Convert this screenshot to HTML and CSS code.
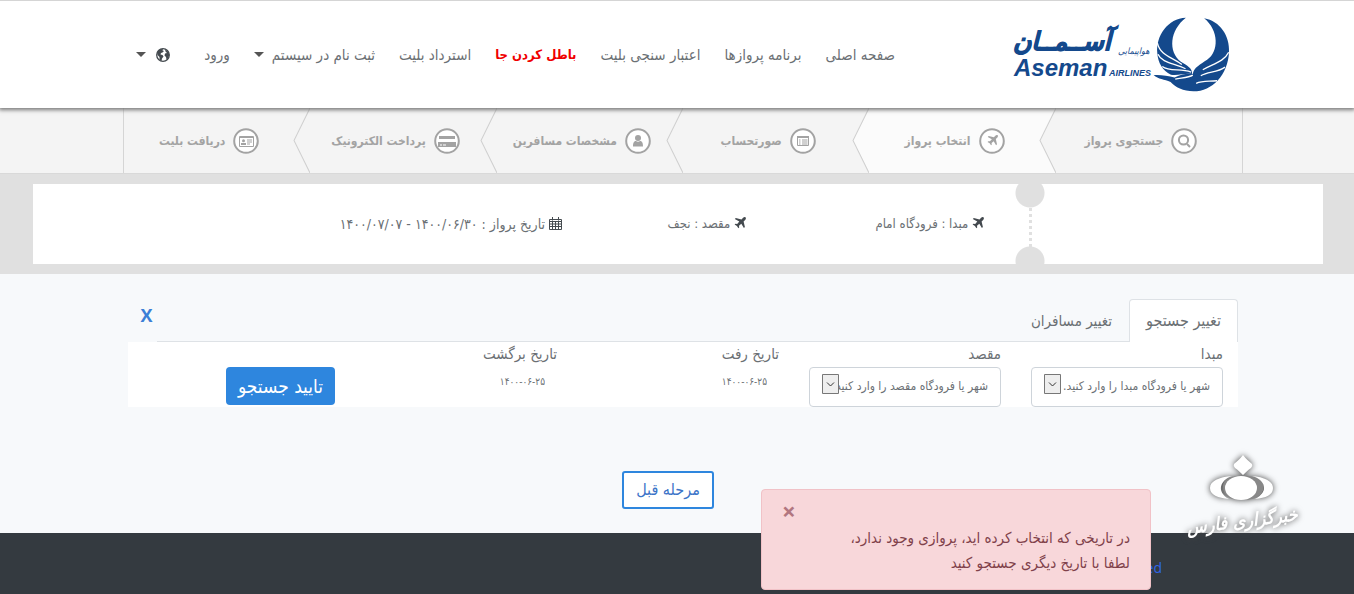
FILE: index.html
```
<!DOCTYPE html>
<html lang="fa" dir="rtl">
<head>
<meta charset="utf-8">
<meta name="viewport" content="width=device-width, initial-scale=1">
<title>انتخاب پرواز</title>
<link rel="stylesheet" href="styles.css">
</head>
<body>
<svg class="sprite" aria-hidden="true">
  <symbol id="plane" viewBox="0 0 12 12"><path d="M11.600.4c-.7-.7-1.900-.2-2.500.4L7.500 2.400 1.800 1.100.8 2.100l4.500 2.500L3.200 6.900 1.400 6.700.6 7.500l2.300 1.500 1.500 2.300.8-.8L5 8.700l2.300-2 2.600 4.400 1-1L9.600 4.400l1.500-1.500c.7-.6 1.200-1.800.5-2.500z"/></symbol>
</svg>
<header class="header">
  <div class="header-inner">
    <a class="brand" href="#" aria-label="Aseman Airlines">
      <svg class="emblem" viewBox="458 52 232 226" aria-hidden="true">
        <path d="M557 54C503 56 466 108 471 161C473 190 487 213 512 226C535 229 555 221 576 224C577 205 559 198 542 187C503 156 508 92 557 54Z"/>
        <path d="M612 56C660 64 690 110 687 158C684 225 637 276 580 276C550 276 524 263 511 248C492 240 474 240 460 227C480 225 503 230 523 234C545 224 562 222 578 224C580 205 602 194 621 181C657 157 657 92 612 56Z"/>
        <path class="feather" d="M471 130C480 168 513 172 545 195M473 164C485 191 522 191 556 208M486 201C508 218 540 206 573 218M686 158C672 187 640 193 608 211M675 203C651 220 625 216 602 229M651 244C626 247 608 243 588 252M525 239C545 235 565 235 578 227"/>
      </svg>
      <svg class="wordmark" viewBox="0 0 140 52" aria-hidden="true">
        <text class="word-fa" x="2" y="21">آســمــان</text>
        <text class="word-fa-small" x="107" y="25">هواپیمایی</text>
        <text class="word-en" x="3" y="47">Aseman</text>
        <text class="word-en-small" x="98" y="47">AIRLINES</text>
      </svg>
    </a>
    <nav class="nav">
      <a href="#">صفحه اصلی</a>
      <a href="#">برنامه پروازها</a>
      <a href="#">اعتبار سنجی بلیت</a>
      <a class="current" href="#">باطل کردن جا</a>
      <a href="#">استرداد بلیت</a>
      <a class="drop" href="#">ثبت نام در سیستم</a>
      <a href="#">ورود</a>
      <a class="drop language" href="#" aria-label="زبان"><svg width="14" height="14" viewBox="0 0 14 14" aria-hidden="true"><circle cx="7" cy="7" r="6.300" fill="#fff" stroke="#444a4f" stroke-width="1.300"/><path fill="#444a4f" d="M1 4.500 3.500 1.500 7 .8 6.500 2.500 8 3 6.500 4.500 5 5 4.500 6.500 6.500 7 7.500 8.500 6 10.500 5.500 13 3.500 11.500 3.500 9 1.500 7zM9 1 12.500 4 13.300 7 12 10.500 10.500 11.500 10 9 8.500 7.500 9 5.500 11 5 9.500 3.500z"/></svg></a>
    </nav>
  </div>
</header>

<div class="steps-bar">
  <ol class="steps">
    <li class="step"><svg class="tip" viewBox="0 0 17 64" preserveAspectRatio="none" aria-hidden="true"><path d="M17 0 1 32 17 64"/></svg>
      <svg class="icon" viewBox="0 0 26 26" aria-hidden="true"><circle class="ring" cx="13" cy="13" r="11.800"/><circle class="line" cx="12.500" cy="12" r="4.600"/><path class="line" d="m16 16 3 3"/></svg><span>جستجوی پرواز</span></li>
    <li class="step active"><svg class="tip" viewBox="0 0 17 64" preserveAspectRatio="none" aria-hidden="true"><path d="M17 0 1 32 17 64"/></svg>
      <svg class="icon" viewBox="0 0 26 26" aria-hidden="true"><circle class="ring" cx="13" cy="13" r="11.800"/><use href="#plane" x="8" y="7" width="11" height="11"/></svg><span>انتخاب پرواز</span></li>
    <li class="step"><svg class="tip" viewBox="0 0 17 64" preserveAspectRatio="none" aria-hidden="true"><path d="M17 0 1 32 17 64"/></svg>
      <svg class="icon" viewBox="0 0 26 26" aria-hidden="true"><circle class="ring" cx="13" cy="13" r="11.800"/><path d="M7 8h12v2H7z"/><path class="thin" d="M7.500 8.500h11v9h-11zM9 12h1.500M12 12h5.500M9 14h1.500M12 14h5.500M9 16h1.500M12 16h5.500"/></svg><span>صورتحساب</span></li>
    <li class="step"><svg class="tip" viewBox="0 0 17 64" preserveAspectRatio="none" aria-hidden="true"><path d="M17 0 1 32 17 64"/></svg>
      <svg class="icon" viewBox="0 0 26 26" aria-hidden="true"><circle class="ring" cx="13" cy="13" r="11.800"/><circle cx="13" cy="10" r="3"/><path d="M8 18.500c0-3 .5-5.500 3-5.500 1 1 3 1 4 0 2.500 0 3 2.500 3 5.500z"/></svg><span>مشخصات مسافرین</span></li>
    <li class="step"><svg class="tip" viewBox="0 0 17 64" preserveAspectRatio="none" aria-hidden="true"><path d="M17 0 1 32 17 64"/></svg>
      <svg class="icon" viewBox="0 0 26 26" aria-hidden="true"><circle class="ring" cx="13" cy="13" r="11.800"/><path d="M5 8h16v3H5zM4 14h18v5H4z"/><path fill="#fff" d="M6 16.500h2v1H6zM9 16.500h3v1H9z"/></svg><span>پرداخت الکترونیک</span></li>
    <li class="step"><svg class="icon" viewBox="0 0 26 26" aria-hidden="true"><circle class="ring" cx="13" cy="13" r="11.800"/><path class="thin" d="M6.500 8.500h14v10h-14zM6.500 9.500h14M14 12h5M14 14h5M14 16h3"/><circle cx="10.500" cy="12.800" r="1.500"/><path d="M8 17v-2h5v2z"/></svg><span>دریافت بلیت</span></li>
  </ol>
</div>

<section class="summary">
  <div class="ticket">
    <div class="stub"></div>
    <p><svg width="12" height="12" aria-hidden="true"><use href="#plane"/></svg> مبدا : فرودگاه امام</p>
    <p><svg width="12" height="12" aria-hidden="true"><use href="#plane"/></svg> مقصد : نجف</p>
    <p class="dates"><svg width="13" height="13" viewBox="0 0 13 13" aria-hidden="true"><path fill="none" stroke="#444a4f" d="M.5 2.500h12v10H.5zM.5 4.500h12M.5 7h12M.5 9.500h12M3.500 5v7M6.500 5v7M9.500 5v7M3.500 0v3.500M9.500 0v3.500"/></svg> تاریخ پرواز : ۱۴۰۰/۰۶/۳۰ - ۱۴۰۰/۰۷/۰۷</p>
  </div>
</section>

<main class="main">
  <div class="content">
    <div class="tabs">
      <div class="tab-list">
        <button class="tab selected" type="button">تغییر جستجو</button>
        <button class="tab" type="button">تغییر مسافران</button>
      </div>
      <button class="dismiss" type="button">X</button>
    </div>
    <form class="search">
      <div class="field">
        <label for="origin">مبدا</label>
        <div class="select-box">
          <select id="origin"><option>شهر یا فرودگاه مبدا را وارد کنید.</option></select>
          <svg class="arrow" viewBox="0 0 17 20" aria-hidden="true"><path d="M.5.5h16v19H.5z"/><path class="chevron" d="m5 8.500 3.500 3.500L12 8.500"/></svg>
        </div>
      </div>
      <div class="field">
        <label for="destination">مقصد</label>
        <div class="select-box">
          <select id="destination"><option>شهر یا فرودگاه مقصد را وارد کنید</option></select>
          <svg class="arrow" viewBox="0 0 17 20" aria-hidden="true"><path d="M.5.5h16v19H.5z"/><path class="chevron" d="m5 8.500 3.500 3.500L12 8.500"/></svg>
        </div>
      </div>
      <div class="field">
        <label for="depart">تاریخ رفت</label>
        <input id="depart" type="text" value="۱۴۰۰-۰۶-۲۵">
      </div>
      <div class="field">
        <label for="return">تاریخ برگشت</label>
        <input id="return" type="text" value="۱۴۰۰-۰۶-۲۵">
      </div>
      <div class="field submit"><button class="confirm" type="button">تایید جستجو</button></div>
    </form>
    <div class="back-row"><button class="back" type="button">مرحله قبل</button></div>
  </div>
</main>

<footer class="footer"><a href="#">ed</a></footer>

<div class="alert" role="alert">
  <button class="close" type="button" aria-label="بستن">×</button>
  <p>در تاریخی که انتخاب کرده اید، پروازی وجود ندارد،<br>لطفا با تاریخ دیگری جستجو کنید</p>
</div>

<svg class="agency" viewBox="0 0 130 100" role="img" aria-label="خبرگزاری فارس">
  <path d="M65 7C68 11 71 13 74 16Q75 18 73 20C70 22 68 24 65 27C62 24 60 22 57 20Q55 18 56 16C59 13 62 11 65 7Z"/>
  <path class="shade" d="M45 38C45 30 54 28 65 28S86 30 86 38 79 52 65 52 45 48 45 38Z"/>
  <path fill-rule="evenodd" d="M32 40C32 33 41 29 54 28C42 32 38 44 51 51C40 50 32 47 32 40ZM95 40C95 33 86 29 74 28C88 32 91 44 77 51C88 50 95 47 95 40Z"/>
  <ellipse cx="63" cy="40" rx="16" ry="12"/>
  <g transform="rotate(-7 65 80)"><text x="65" y="79">خبرگزاری فارس</text></g>
</svg>
</body>
</html>
```
FILE: styles.css
```
* { box-sizing: border-box; }
body {
  margin: 0;
  min-height: 100vh;
  display: flex;
  flex-direction: column;
  position: relative;
  background: #f7f9fb;
  color: #6b7074;
  font: 15px/24px "DejaVu Sans Condensed", "DejaVu Sans", sans-serif;
}
button, input, select { font: inherit; color: inherit; }
button { cursor: pointer; }
a { text-decoration: none; color: inherit; }
p { margin: 0; }
.sprite { position: absolute; width: 0; height: 0; }

.header {
  position: relative;
  z-index: 10;
  padding-left: 12px;
  background: #fff;
  border-top: 1px solid #d5d5d5;
  box-shadow: 0 1px 4px 1px #777;
}
.header-inner {
  max-width: 1110px;
  margin: 0 auto;
  padding: 16px 8px;
  display: flex;
  align-items: center;
}
.brand { display: flex; align-items: center; gap: 2px; }
.emblem { width: 77px; height: 75px; fill: #14498c; }
.feather { fill: none; stroke: #fff; stroke-width: 4; }
.wordmark { width: 140px; height: 52px; direction: ltr; fill: #14498c; overflow: visible; }
.word-fa { font: italic bold 25px "DejaVu Sans", sans-serif; stroke: #14498c; stroke-width: 1; }
.word-fa-small { font: italic 9px "DejaVu Sans Condensed", sans-serif; }
.word-en { font: italic bold 24px "Liberation Sans", sans-serif; }
.word-en-small { font: italic bold 9px "Liberation Sans", sans-serif; }
.nav {
  flex: 1;
  display: flex;
  align-items: center;
  gap: 24px;
  margin-inline-start: 116px;
  white-space: nowrap;
}
.nav .current { color: #f00000; font-size: 13px; font-weight: bold; }
.drop { display: flex; align-items: center; gap: 8px; }
.language { margin-inline-start: auto; gap: 10px; }
.drop::after {
  content: "";
  border: 5px solid transparent;
  border-top-color: #555;
  border-bottom: 0;
}

.steps-bar { padding-left: 12px; background: #f4f4f4; border-bottom: 1px solid #d9d9d9; }
.steps {
  max-width: 1120px;
  margin: 0 auto;
  padding: 0;
  list-style: none;
  display: flex;
  border: solid #d5d5d5;
  border-width: 0 1px;
  color: #a3a3a3;
  font-size: 12px;
  font-weight: bold;
}
.step {
  flex: 1;
  position: relative;
  height: 65px;
  padding-inline: 18px 2px;
  display: flex;
  align-items: center;
  justify-content: center;
  gap: 8px;
  background: #f4f4f4;
  white-space: nowrap;
}
.step.active { background: #fbfbfb; }
.tip {
  position: absolute;
  z-index: 1;
  right: 100%;
  top: 0;
  width: 17px;
  height: 100%;
  fill: #f4f4f4;
  stroke: #cfcfcf;
}
.active .tip { fill: #fbfbfb; }
.icon { width: 26px; height: 26px; fill: #a3a3a3; }
.ring { fill: #fff; stroke: #a3a3a3; stroke-width: 2; }
.line { fill: none; stroke: #a3a3a3; stroke-width: 2; }
.thin { fill: none; stroke: #a3a3a3; }

.summary { background: #e0e0e0; padding: 10px 31px 10px 33px; }
.ticket {
  display: grid;
  grid-template-columns: 278fr 30px 31fr 238fr 184fr 529fr;
  align-items: center;
  height: 80px;
  background: #fff;
  font-size: 13px;
  white-space: nowrap;
}
.ticket p:nth-of-type(1) { grid-column: 4; }
.ticket .dates { font-size: 14px; }
.ticket svg { vertical-align: -1px; fill: #444a4f; }
.stub {
  grid-column: 2;
  height: 80px;
  background:
    radial-gradient(circle at 15px 9px, #e0e0e0 14px, transparent 15px),
    radial-gradient(circle at 15px 77px, #e0e0e0 14px, transparent 15px),
    repeating-linear-gradient(#e0e0e0 0 3px, transparent 3px 6px) center / 3px 100% no-repeat;
}

.main { padding: 25px 0 24px 12px; }
.content { max-width: 1110px; margin: 0 auto; }
.tabs { display: flex; align-items: center; }
.tab-list { flex: 1; display: flex; border-bottom: 1px solid #dee2e6; }
.tab {
  height: 42px;
  padding: 0 16px;
  border: 1px solid transparent;
  border-bottom: 0;
  background: none;
  border-radius: 4px 4px 0 0;
}
.tab.selected {
  height: 43px;
  margin-bottom: -1px;
  border-color: #dee2e6;
  background: #fff;
  font-size: 16px;
}
.dismiss {
  width: 29px;
  padding: 0 0 12px;
  padding-inline-end: 8px;
  border: 0;
  background: none;
  color: #3c7fd6;
  font: bold 18px/24px "Open Sans", sans-serif;
}
.search { display: grid; grid-template-columns: repeat(5, 1fr); background: #fff; }
.field { padding: 0 15px; min-width: 0; }
.field label { display: block; height: 25px; }
.select-box {
  position: relative;
  height: 40px;
  padding: 6px 12px;
  border: 1px solid #ced4da;
  border-radius: 4px;
}
.select-box select {
  display: block;
  width: 100%;
  height: 20px;
  padding: 0;
  border: 0;
  appearance: none;
  background: #fff;
  font-size: 12px;
}
.arrow { position: absolute; left: 12px; top: 6px; width: 17px; height: 20px; fill: #eee; stroke: #777; }
.chevron { fill: none; stroke: #333; }
.field input {
  display: block;
  width: 100%;
  height: 28px;
  padding: 0 12px;
  border: 0;
  background: none;
  font-size: 10px;
}
.submit { padding-top: 25px; }
.confirm {
  height: 38px;
  padding: 0 12px;
  border: 0;
  border-radius: 4px;
  background: #2e86de;
  color: #fff;
  font-size: 19px;
}
.back-row { display: flex; justify-content: center; padding-top: 64px; padding-inline-start: 30px; }
.back {
  height: 38px;
  padding: 0 12px;
  border: 2px solid #2e86de;
  border-radius: 3px;
  background: #fff;
  color: #3c74c8;
  font-size: 16px;
}

.footer { flex: 1; padding: 23px 192px 0 0; background: #343a40; }
.footer a { color: #2f66e8; font: 14px/24px "Open Sans", sans-serif; }

.alert {
  position: absolute;
  z-index: 5;
  right: 15%;
  bottom: 4px;
  width: 390px;
  padding: 7px 20px 13px;
  border: 1px solid #f1c2c7;
  border-radius: 4px;
  background: #f8d7da;
  color: #80414a;
  line-height: 25px;
}
.close {
  display: block;
  margin-inline-start: auto;
  padding: 0 0 1px;
  border: 0;
  background: none;
  color: #b27680;
  font: bold 24px/28px "Open Sans", sans-serif;
}
.agency {
  position: absolute;
  z-index: 6;
  right: 46px;
  bottom: 46px;
  width: 130px;
  height: 100px;
  fill: #fff;
  filter: drop-shadow(0 0 3px #444);
}
.agency .shade { fill: #888; }
.agency text { font: italic bold 18px "DejaVu Sans Condensed", sans-serif; text-anchor: middle; }
```
